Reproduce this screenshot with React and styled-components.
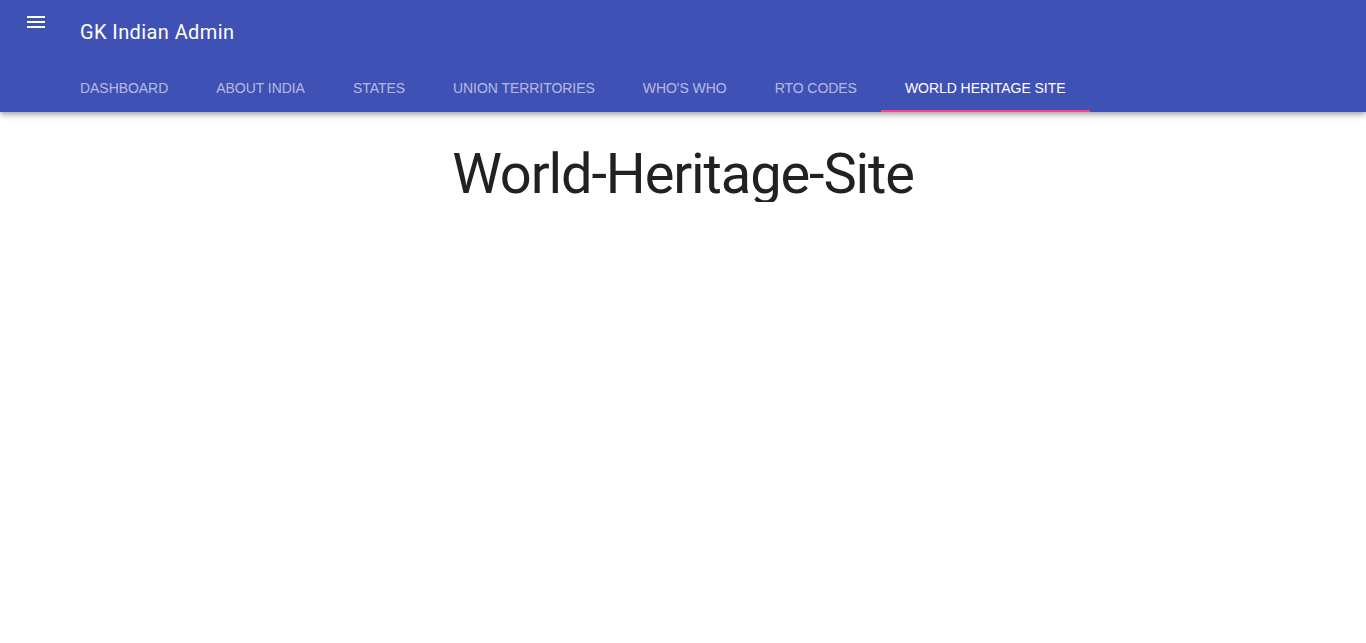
import React from "react";
import styled, { createGlobalStyle } from "styled-components";

const Global = createGlobalStyle`
  html, body { margin: 0; padding: 0; background: #fff; }
  body { font-family: Roboto, "Helvetica Neue", sans-serif; }
`;

const Header = styled.header`
  background: #3f51b5;
  color: #fff;
  box-shadow: 0 2px 4px -1px rgba(0,0,0,.2), 0 4px 5px 0 rgba(0,0,0,.14), 0 1px 10px 0 rgba(0,0,0,.12);
  position: relative;
  z-index: 2;
`;

const TopRow = styled.div`
  height: 64px;
  display: flex;
  align-items: flex-start;
`;

const MenuButton = styled.button`
  width: 24px;
  height: 24px;
  margin: 10px 32px 0 24px;
  padding: 0;
  border: 0;
  background: transparent;
  color: #fff;
  display: flex;
  cursor: pointer;
`;

const Title = styled.h1`
  margin: 0;
  height: 64px;
  display: flex;
  align-items: center;
  font-family: Roboto, sans-serif;
  font-size: 20px;
  font-weight: 400;
  letter-spacing: 0.4px;
`;

const Tabs = styled.nav`
  height: 48px;
  display: flex;
  padding-left: 56px;
`;

const Tab = styled.a`
  position: relative;
  display: flex;
  align-items: center;
  padding: 0 24px;
  height: 48px;
  box-sizing: border-box;
  font-family: "Liberation Sans", Arial, sans-serif;
  font-size: 14px;
  letter-spacing: -0.05px;
  text-transform: uppercase;
  color: ${p => (p.$active ? "#ffffff" : "rgba(255,255,255,0.62)")};
  text-decoration: none;
  cursor: pointer;
  &::after {
    content: "";
    display: ${p => (p.$active ? "block" : "none")};
    position: absolute;
    left: 0;
    right: 0;
    bottom: 0;
    height: 2px;
    background: #ff4081;
  }
`;

const Main = styled.main`
  display: flex;
  justify-content: center;
  padding-top: 34px;
`;

const Heading = styled.h2`
  margin: 0;
  font-family: Roboto, sans-serif;
  font-size: 56px;
  font-weight: 400;
  line-height: 56px;
  letter-spacing: -0.02em;
  color: #212121;
`;

const tabs = [
  "Dashboard",
  "About India",
  "States",
  "Union Territories",
  "Who's Who",
  "RTO Codes",
  "World Heritage Site",
];

export default function App() {
  return (
    <>
      <Global />
      <Header>
        <TopRow>
          <MenuButton aria-label="menu">
            <svg width="24" height="24" viewBox="0 0 24 24" fill="currentColor">
              <path d="M3 18h18v-2H3v2zm0-5h18v-2H3v2zm0-7v2h18V6H3z" />
            </svg>
          </MenuButton>
          <Title>GK Indian Admin</Title>
        </TopRow>
        <Tabs>
          {tabs.map((t, i) => (
            <Tab key={t} $active={i === tabs.length - 1}>
              {t}
            </Tab>
          ))}
        </Tabs>
      </Header>
      <Main>
        <Heading>World-Heritage-Site</Heading>
      </Main>
    </>
  );
}
